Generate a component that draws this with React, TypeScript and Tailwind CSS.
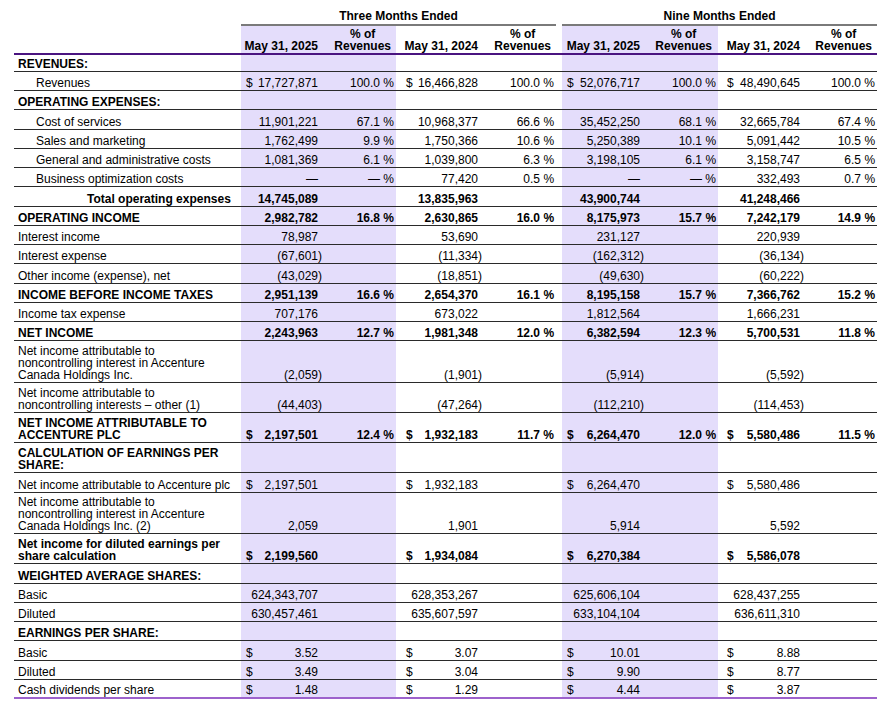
import React from "react";

type Row = {
  label: string[];
  kind: "head" | "norm" | "bold";
  indent: string;
  v?: string[];
  dollar?: boolean;
  h: string;
  last?: boolean;
};

const I0 = "pl-[4px]";
const I1 = "pl-[22px]";
const I2 = "pl-[73px]";

const rows: Row[] = [
  { label: ["REVENUES:"], kind: "head", indent: I0, h: "h-[17px]" },
  { label: ["Revenues"], kind: "norm", indent: I1, h: "h-[19px]", dollar: true, v: ["17,727,871", "100.0 %", "16,466,828", "100.0 %", "52,076,717", "100.0 %", "48,490,645", "100.0 %"] },
  { label: ["OPERATING EXPENSES:"], kind: "head", indent: I0, h: "h-[19px]" },
  { label: ["Cost of services"], kind: "norm", indent: I1, h: "h-[20px]", v: ["11,901,221", "67.1 %", "10,968,377", "66.6 %", "35,452,250", "68.1 %", "32,665,784", "67.4 %"] },
  { label: ["Sales and marketing"], kind: "norm", indent: I1, h: "h-[19px]", v: ["1,762,499", "9.9 %", "1,750,366", "10.6 %", "5,250,389", "10.1 %", "5,091,442", "10.5 %"] },
  { label: ["General and administrative costs"], kind: "norm", indent: I1, h: "h-[19px]", v: ["1,081,369", "6.1 %", "1,039,800", "6.3 %", "3,198,105", "6.1 %", "3,158,747", "6.5 %"] },
  { label: ["Business optimization costs"], kind: "norm", indent: I1, h: "h-[19px]", v: ["—", "— %", "77,420", "0.5 %", "—", "— %", "332,493", "0.7 %"] },
  { label: ["Total operating expenses"], kind: "bold", indent: I2, h: "h-[20px]", v: ["14,745,089", "", "13,835,963", "", "43,900,744", "", "41,248,466", ""] },
  { label: ["OPERATING INCOME"], kind: "bold", indent: I0, h: "h-[19px]", v: ["2,982,782", "16.8 %", "2,630,865", "16.0 %", "8,175,973", "15.7 %", "7,242,179", "14.9 %"] },
  { label: ["Interest income"], kind: "norm", indent: I0, h: "h-[19px]", v: ["78,987", "", "53,690", "", "231,127", "", "220,939", ""] },
  { label: ["Interest expense"], kind: "norm", indent: I0, h: "h-[19px]", v: ["(67,601)", "", "(11,334)", "", "(162,312)", "", "(36,134)", ""] },
  { label: ["Other income (expense), net"], kind: "norm", indent: I0, h: "h-[20px]", v: ["(43,029)", "", "(18,851)", "", "(49,630)", "", "(60,222)", ""] },
  { label: ["INCOME BEFORE INCOME TAXES"], kind: "bold", indent: I0, h: "h-[19px]", v: ["2,951,139", "16.6 %", "2,654,370", "16.1 %", "8,195,158", "15.7 %", "7,366,762", "15.2 %"] },
  { label: ["Income tax expense"], kind: "norm", indent: I0, h: "h-[19px]", v: ["707,176", "", "673,022", "", "1,812,564", "", "1,666,231", ""] },
  { label: ["NET INCOME"], kind: "bold", indent: I0, h: "h-[19px]", v: ["2,243,963", "12.7 %", "1,981,348", "12.0 %", "6,382,594", "12.3 %", "5,700,531", "11.8 %"] },
  { label: ["Net income attributable to", "noncontrolling interest in Accenture", "Canada Holdings Inc."], kind: "norm", indent: I0, h: "h-[42px]", v: ["(2,059)", "", "(1,901)", "", "(5,914)", "", "(5,592)", ""] },
  { label: ["Net income attributable to", "noncontrolling interests – other (1)"], kind: "norm", indent: I0, h: "h-[30px]", v: ["(44,403)", "", "(47,264)", "", "(112,210)", "", "(114,453)", ""] },
  { label: ["NET INCOME ATTRIBUTABLE TO", "ACCENTURE PLC"], kind: "bold", indent: I0, h: "h-[30px]", dollar: true, v: ["2,197,501", "12.4 %", "1,932,183", "11.7 %", "6,264,470", "12.0 %", "5,580,486", "11.5 %"] },
  { label: ["CALCULATION OF EARNINGS PER", "SHARE:"], kind: "head", indent: I0, h: "h-[30px]" },
  { label: ["Net income attributable to Accenture plc"], kind: "norm", indent: I0, h: "h-[20px]", dollar: true, v: ["2,197,501", "", "1,932,183", "", "6,264,470", "", "5,580,486", ""] },
  { label: ["Net income attributable to", "noncontrolling interest in Accenture", "Canada Holdings Inc. (2)"], kind: "norm", indent: I0, h: "h-[41px]", v: ["2,059", "", "1,901", "", "5,914", "", "5,592", ""] },
  { label: ["Net income for diluted earnings per", "share calculation"], kind: "bold", indent: I0, h: "h-[30px]", dollar: true, v: ["2,199,560", "", "1,934,084", "", "6,270,384", "", "5,586,078", ""] },
  { label: ["WEIGHTED AVERAGE SHARES:"], kind: "head", indent: I0, h: "h-[20px]" },
  { label: ["Basic"], kind: "norm", indent: I0, h: "h-[19px]", v: ["624,343,707", "", "628,353,267", "", "625,606,104", "", "628,437,255", ""] },
  { label: ["Diluted"], kind: "norm", indent: I0, h: "h-[19px]", v: ["630,457,461", "", "635,607,597", "", "633,104,104", "", "636,611,310", ""] },
  { label: ["EARNINGS PER SHARE:"], kind: "head", indent: I0, h: "h-[19px]" },
  { label: ["Basic"], kind: "norm", indent: I0, h: "h-[20px]", dollar: true, v: ["3.52", "", "3.07", "", "10.01", "", "8.88", ""] },
  { label: ["Diluted"], kind: "norm", indent: I0, h: "h-[19px]", dollar: true, v: ["3.49", "", "3.04", "", "9.90", "", "8.77", ""] },
  { label: ["Cash dividends per share"], kind: "norm", indent: I0, h: "h-[19px]", dollar: true, v: ["1.48", "", "1.29", "", "4.44", "", "3.87", ""], last: true },
];

const numCols = [
  { shade: true, cls: "pl-[5px] pr-[12px]" },
  { shade: false, cls: "pl-[10px] pr-[12px]" },
  { shade: true, cls: "pl-[5px] pr-[12px]" },
  { shade: false, cls: "pl-[9px] pr-[10px]" },
];

function NumVal({ v }: { v: string }) {
  if (v.startsWith("(") && v.endsWith(")")) {
    return (
      <span className="relative">
        {v.slice(0, -1)}
        <span className="absolute left-full top-0">)</span>
      </span>
    );
  }
  return <span>{v}</span>;
}

export default function App() {
  const shadeBg = "bg-[#e4ddfb]";
  return (
    <div className="w-[888px] h-[711px] bg-white overflow-hidden font-['Liberation_Sans',Arial,sans-serif] text-[12px] leading-[12px] text-black">
      <table className="ml-[14px] w-[863px] table-fixed border-separate border-spacing-0">
        <colgroup>
          <col className="w-[227px]" />
          <col className="w-[89px]" />
          <col className="w-[66px]" />
          <col className="w-[94px]" />
          <col className="w-[66px]" />
          <col className="w-[6px]" />
          <col className="w-[90px]" />
          <col className="w-[66px]" />
          <col className="w-[92px]" />
          <col className="w-[67px]" />
        </colgroup>
        <thead>
          <tr>
            <td className="h-[26px]"></td>
            <td colSpan={4} className="h-[26px] align-bottom text-center font-bold pb-[2px] border-b-2 border-[#7a7a7a]">
              Three Months Ended
            </td>
            <td className="h-[26px]"></td>
            <td colSpan={4} className="h-[26px] align-bottom text-center font-bold pb-[2px] border-b-2 border-[#7a7a7a]">
              Nine Months Ended
            </td>
          </tr>
          <tr className="font-bold">
            <td className="h-[29px] border-b-2 border-[#4a1480]"></td>
            <td className={`h-[29px] align-bottom text-right pr-[12px] pb-[1px] border-b-2 border-[#4a1480] ${shadeBg}`}>May 31, 2025</td>
            <td className={`h-[29px] align-bottom text-right pr-[5px] pb-[1px] border-b-2 border-[#4a1480] ${shadeBg}`}>
              <span className="inline-block text-center">% of<br />Revenues</span>
            </td>
            <td className="h-[29px] align-bottom text-right pr-[12px] pb-[1px] border-b-2 border-[#4a1480]">May 31, 2024</td>
            <td className="h-[29px] align-bottom text-right pr-[5px] pb-[1px] border-b-2 border-[#4a1480]">
              <span className="inline-block text-center">% of<br />Revenues</span>
            </td>
            <td className="h-[29px] border-b-2 border-[#4a1480]"></td>
            <td className={`h-[29px] align-bottom text-right pr-[12px] pb-[1px] border-b-2 border-[#4a1480] ${shadeBg}`}>May 31, 2025</td>
            <td className={`h-[29px] align-bottom text-right pr-[6px] pb-[1px] border-b-2 border-[#4a1480] ${shadeBg}`}>
              <span className="inline-block text-center">% of<br />Revenues</span>
            </td>
            <td className="h-[29px] align-bottom text-right pr-[10px] pb-[1px] border-b-2 border-[#4a1480]">May 31, 2024</td>
            <td className="h-[29px] align-bottom text-right pr-[5px] pb-[1px] border-b-2 border-[#4a1480]">
              <span className="inline-block text-center">% of<br />Revenues</span>
            </td>
          </tr>
        </thead>
        <tbody>
          {rows.map((r, i) => {
            const border = r.last ? "border-b-2 border-[#9d62cc]" : "border-b border-[#2a2a2a]";
            const bold = r.kind !== "norm" ? "font-bold" : "";
            const base = `${r.h} align-bottom pb-[1px] ${border}`;
            const cells: React.ReactNode[] = [];
            for (let g = 0; g < 4; g++) {
              const nc = numCols[g];
              const val = r.v ? r.v[g * 2] : "";
              const pct = r.v ? r.v[g * 2 + 1] : "";
              cells.push(
                <td key={`n${g}`} className={`${base} ${nc.cls} ${nc.shade ? shadeBg : ""} ${bold}`}>
                  {val !== "" && (
                    <div className="flex justify-between">
                      <span>{r.dollar ? "$" : ""}</span>
                      <NumVal v={val} />
                    </div>
                  )}
                </td>
              );
              cells.push(
                <td key={`p${g}`} className={`${base} pr-[2px] text-right ${nc.shade ? shadeBg : ""} ${bold}`}>
                  {pct}
                </td>
              );
              if (g === 1) {
                cells.push(<td key="sp" className={base}></td>);
              }
            }
            return (
              <tr key={i}>
                <td className={`${base} ${r.indent} ${bold}`}>
                  {r.label.map((l, j) => (
                    <div key={j}>{l}</div>
                  ))}
                </td>
                {cells}
              </tr>
            );
          })}
        </tbody>
      </table>
    </div>
  );
}
